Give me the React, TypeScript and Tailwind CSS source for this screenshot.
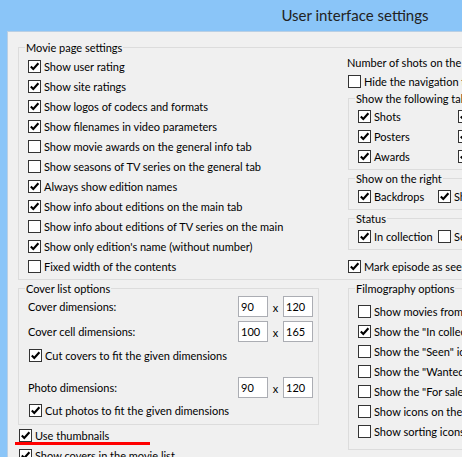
import React from "react";

function Box({ checked }: { checked?: boolean }) {
	return (
		<span className="flex h-[13px] w-[13px] shrink-0 items-center justify-center border border-[#333333] bg-white">
			{checked && (
				<svg width="11" height="11" viewBox="0 0 11 11">
					<path d="M1.8 5.4 L4.3 8 L9.4 2.2" fill="none" stroke="#000" strokeWidth="2.1" />
				</svg>
			)}
		</span>
	);
}

function Check({ label, checked, className = "" }: { label: string; checked?: boolean; className?: string }) {
	return (
		<div className={`flex h-[20px] shrink-0 items-center gap-[3px] whitespace-nowrap ${className}`}>
			<Box checked={checked} />
			<span>{label}</span>
		</div>
	);
}

function Group({
	title,
	className = "",
	bodyClass = "",
	children,
}: {
	title: string;
	className?: string;
	bodyClass?: string;
	children: React.ReactNode;
}) {
	return (
		<fieldset className={`border border-[#dcdcdc] ${className}`}>
			<legend className="ml-[6px] px-[1px] leading-[15px]">{title}</legend>
			<div className={bodyClass}>{children}</div>
		</fieldset>
	);
}

function SizeRow({ label, a, b, className = "" }: { label: string; a: string; b: string; className?: string }) {
	return (
		<div className={`flex h-[21px] items-center justify-between pl-[9px] pr-[5px] ${className}`}>
			<span>{label}</span>
			<div className="flex items-center">
				<input readOnly value={a} className="h-[21px] w-[30px] border border-[#abadb3] bg-white pl-[2px] text-left outline-none" />
				<span className="w-[15px] pt-[2px] text-center">x</span>
				<input readOnly value={b} className="h-[21px] w-[30px] border border-[#abadb3] bg-white pl-[2px] text-left outline-none" />
			</div>
		</div>
	);
}

const movieOptions: [string, boolean][] = [
	["Show user rating", true],
	["Show site ratings", true],
	["Show logos of codecs and formats", true],
	["Show filenames in video parameters", true],
	["Show movie awards on the general info tab", false],
	["Show seasons of TV series on the general tab", false],
	["Always show edition names", true],
	["Show info about editions on the main tab", true],
	["Show info about editions of TV series on the main", false],
	["Show only edition's name (without number)", true],
	["Fixed width of the contents", false],
];

const tabs: [string, string][] = [
	["Shots", "Seasons"],
	["Posters", "Cast"],
	["Awards", "Trailers"],
];

const filmography: [string, boolean][] = [
	["Show movies from collections only", false],
	['Show the "In collection" icon', true],
	['Show the "Seen" icon', false],
	['Show the "Wanted" icon', false],
	['Show the "For sale" icon', false],
	["Show icons on the posters", false],
	["Show sorting icons", false],
];

export default function App() {
	return (
		<div className="h-[457px] w-[462px] overflow-hidden bg-[#8ac5f8] font-['Segoe_UI','Lato',sans-serif] text-[11px] leading-[15px] text-black">
			<div className="flex h-[31px] w-[710px] items-center justify-center text-[15px] text-[#222222]">
				User interface settings
			</div>
			<div className="ml-[7px] h-[426px] w-[720px] border-l border-t border-[#b9cfe4] bg-[#f0f0f0] pl-[10px] pt-[8px]">
				<Group title="Movie page settings" className="w-[700px] pb-[3px]" bodyClass="flex">
					<div className="flex w-[328px] shrink-0 flex-col pl-[9px] pt-[1px]">
						{movieOptions.map(([label, checked]) => (
							<Check key={label} label={label} checked={checked} />
						))}
					</div>
					<div className="flex w-[240px] flex-col">
						<div className="h-[16px] whitespace-nowrap leading-[16px]">Number of shots on the main tab</div>
						<Check label="Hide the navigation tabs" className="ml-[1px]" />
						<Group title="Show the following tabs" className="ml-[1px] w-[220px] pb-[3px]" bodyClass="pl-[9px]">
							{tabs.map(([a, b]) => (
								<div key={a} className="flex">
									<Check label={a} checked className="w-[100px]" />
									<Check label={b} checked />
								</div>
							))}
						</Group>
						<Group title="Show on the right" className="ml-[1px] mt-[1px] w-[220px] pb-[3px]" bodyClass="flex pl-[9px]">
							<Check label="Backdrops" checked className="w-[80px]" />
							<Check label="Shots" checked />
						</Group>
						<Group title="Status" className="ml-[1px] mt-[1px] w-[220px] pb-[3px]" bodyClass="flex pl-[9px]">
							<Check label="In collection" checked className="w-[80px]" />
							<Check label="Seen" />
						</Group>
						<Check label="Mark episode as seen when watched" checked className="ml-[1px] mt-[6px]" />
					</div>
				</Group>
				<div className="mt-[1px] flex items-start">
					<div className="flex w-[301px] shrink-0 flex-col">
						<Group title="Cover list options" className="w-[301px] pb-[4px]">
							<SizeRow label="Cover dimensions:" a="90" b="120" />
							<SizeRow label="Cover cell dimensions:" a="100" b="165" className="mt-[4px]" />
							<Check label="Cut covers to fit the given dimensions" checked className="mt-[3px] pl-[10px]" />
							<SizeRow label="Photo dimensions:" a="90" b="120" className="mt-[12px]" />
							<Check label="Cut photos to fit the given dimensions" checked className="mt-[2px] pl-[10px]" />
						</Group>
						<div className="relative ml-[1px]">
							<Check label="Use thumbnails" checked />
							<div className="absolute left-[-4px] top-[17px] h-[3px] w-[135px] bg-[#ff0000]" />
						</div>
						<Check label="Show covers in the movie list" checked className="ml-[1px]" />
					</div>
					<Group
						title="Filmography options"
						className="ml-[29px] w-[220px] shrink-0 pb-[8px]"
						bodyClass="pl-[9px] pt-[5px]"
					>
						{filmography.map(([label, checked]) => (
							<Check key={label} label={label} checked={checked} />
						))}
					</Group>
				</div>
			</div>
		</div>
	);
}
